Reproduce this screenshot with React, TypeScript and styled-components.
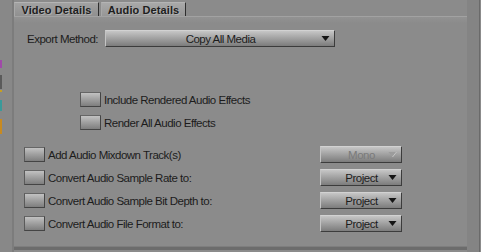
import React from "react";
import styled, { createGlobalStyle } from "styled-components";

const Global = createGlobalStyle`
  html, body {
    margin: 0;
    padding: 0;
    background: #8b8b8b;
    overflow: hidden;
  }
`;

const Frame = styled.div`
  display: flex;
  width: 481px;
  height: 252px;
  background: #8b8b8b;
  font-family: "Liberation Sans", Arial, sans-serif;
  font-size: 11.5px;
  color: #1c1c1c;
  overflow: hidden;
`;

const LeftEdge = styled.div`
  width: 12px;
  display: flex;
  flex-direction: column;
  background: #888888;
  border-right: 2px solid #7c7c7c;
  padding-top: 60px;
`;

const Stub = styled.div<{ $color: string; $h: number; $gap?: number }>`
  width: 2px;
  height: ${(p) => p.$h}px;
  margin-bottom: ${(p) => p.$gap ?? 0}px;
  background: ${(p) => p.$color};
`;

const Main = styled.div`
  flex: 1;
  display: flex;
  flex-direction: column;
`;

const TabBar = styled.div`
  height: 16px;
  display: flex;
  align-items: flex-end;
  gap: 2px;
`;

const Tab = styled.div<{ $active?: boolean }>`
  width: 85px;
  height: 14px;
  box-sizing: border-box;
  display: flex;
  align-items: center;
  justify-content: center;
  font-weight: bold;
  font-size: 11px;
  letter-spacing: 0.1px;
  color: #1e1e1e;
  text-shadow: 1px 1px 0 rgba(200, 200, 200, 0.55);
  border-top: 1px solid #b4b4b4;
  border-left: 1px solid #a8a8a8;
  border-right: 1px solid #2e2e2e;
  background: ${(p) =>
    p.$active
      ? "linear-gradient(#a9a9a9, #969696)"
      : "linear-gradient(#a2a2a2, #8f8f8f)"};
`;

const Panel = styled.div`
  flex: 1;
  display: flex;
  flex-direction: column;
  border-top: 1px solid #a2a2a2;
  background: linear-gradient(#929292, #8b8b8b 6px);
  padding-top: 13px;
`;

const BottomBand = styled.div`
  height: 3px;
  border-top: 1px solid #7e7e7e;
  background: #6c6c6c;
  margin-bottom: 2px;
`;

const ExportRow = styled.div`
  display: flex;
  align-items: center;
  height: 17px;
  padding-left: 13px;
`;

const Label = styled.span<{ $width?: number }>`
  width: ${(p) => (p.$width ? `${p.$width}px` : "auto")};
  letter-spacing: -0.5px;
  white-space: nowrap;
`;

const Group = styled.div<{ $top: number; $left: number }>`
  display: flex;
  flex-direction: column;
  gap: 6px;
  margin-top: ${(p) => p.$top}px;
  padding-left: ${(p) => p.$left}px;
  padding-right: 65px;
`;

const Row = styled.div`
  display: flex;
  align-items: center;
  height: 17px;
`;

const Check = styled.div`
  width: 21px;
  height: 15px;
  box-sizing: border-box;
  margin-right: 3px;
  border: 1px solid #444;
  border-top-color: #666;
  border-left-color: #5a5a5a;
  background: linear-gradient(#c2c2c2, #a2a2a2 45%, #7e7e7e);
  flex-shrink: 0;
`;

const Select = styled.div<{ $width: number; $disabled?: boolean }>`
  width: ${(p) => p.$width}px;
  height: 17px;
  box-sizing: border-box;
  display: flex;
  align-items: center;
  padding: 0 4px 0 5px;
  margin-left: ${(p) => (p.$width < 100 ? "auto" : "0")};
  border: 1px solid #3c3c3c;
  border-top-color: #d2d2d2;
  border-left-color: #c4c4c4;
  background: linear-gradient(#c6c6c6, #a4a4a4 45%, #7c7c7c);
  color: ${(p) => (p.$disabled ? "#7a7a7a" : "#1c1c1c")};
`;

const SelectText = styled.span`
  flex: 1;
  text-align: center;
  letter-spacing: -0.5px;
  white-space: nowrap;
`;

const Spacer = styled.span`
  width: 9px;
`;

const ArrowBox = styled.svg`
  width: 9px;
  height: 5px;
  display: block;
`;

const Arrow: React.FC<{ disabled?: boolean }> = ({ disabled }) => (
  <ArrowBox viewBox="0 0 9 5">
    <polygon points="0.5,0 8.5,0 4.5,5" fill={disabled ? "#9c9c9c" : "#151515"} />
    {disabled && <polyline points="8.5,0 4.5,5" stroke="#c4c4c4" strokeWidth="1" fill="none" />}
  </ArrowBox>
);

const Dropdown: React.FC<{ value: string; width: number; disabled?: boolean }> = ({
  value,
  width,
  disabled,
}) => (
  <Select $width={width} $disabled={disabled}>
    <Spacer />
    <SelectText>{value}</SelectText>
    <Arrow disabled={disabled} />
  </Select>
);

const RightEdge = styled.div`
  width: 12px;
  background: #848484;
  border-right: 1px solid #6a6a6a;
  margin-right: 1px;
`;

const upper = ["Include Rendered Audio Effects", "Render All Audio Effects"];

const lower: { label: string; value: string; disabled?: boolean }[] = [
  { label: "Add Audio Mixdown Track(s)", value: "Mono", disabled: true },
  { label: "Convert Audio Sample Rate to:", value: "Project" },
  { label: "Convert Audio Sample Bit Depth to:", value: "Project" },
  { label: "Convert Audio File Format to:", value: "Project" },
];

export default function App() {
  return (
    <>
      <Global />
      <Frame>
        <LeftEdge>
          <Stub $color="#a04aa8" $h={8} $gap={7} />
          <Stub $color="#5a5a5a" $h={14} $gap={1} />
          <Stub $color="#c8a020" $h={2} $gap={8} />
          <Stub $color="#3a9a9a" $h={11} $gap={8} />
          <Stub $color="#c88a20" $h={15} />
        </LeftEdge>
        <Main>
          <TabBar>
            <Tab>Video Details</Tab>
            <Tab $active>Audio Details</Tab>
          </TabBar>
          <Panel>
            <ExportRow>
              <Label $width={78}>Export Method:</Label>
              <Dropdown value="Copy All Media" width={230} />
            </ExportRow>
            <Group $top={44} $left={66}>
              {upper.map((t) => (
                <Row key={t}>
                  <Check />
                  <Label>{t}</Label>
                </Row>
              ))}
            </Group>
            <Group $top={15} $left={10}>
              {lower.map((r) => (
                <Row key={r.label}>
                  <Check />
                  <Label>{r.label}</Label>
                  <Dropdown value={r.value} width={82} disabled={r.disabled} />
                </Row>
              ))}
            </Group>
          </Panel>
          <BottomBand />
        </Main>
        <RightEdge />
      </Frame>
    </>
  );
}
